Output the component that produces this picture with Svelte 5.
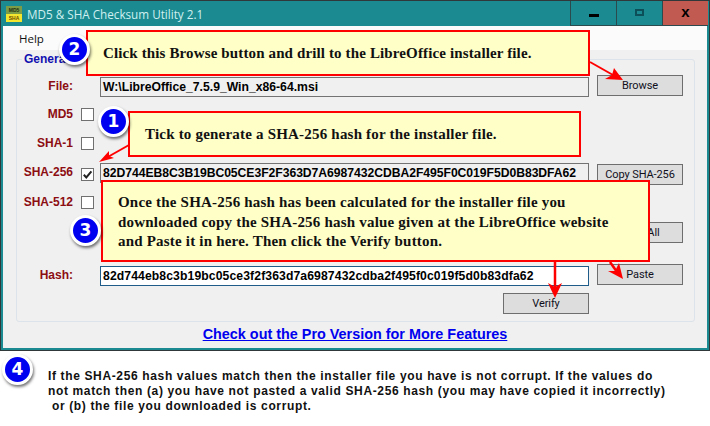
<script lang="ts">
  const hash = "82D744EB8C3B19BC05CE3F2F363D7A6987432CDBA2F495F0C019F5D0B83DFA62";
</script>

<div class="page">
  <div class="window">
    <header class="titlebar">
      <div class="appicon"><span class="top">MD5</span><span class="bottom">SHA</span></div>
      <span class="title">MD5 &amp; SHA Checksum Utility 2.1</span>
      <div class="controls">
        <div class="ctl"><span class="min"></span></div>
        <div class="ctl"><span class="max"></span></div>
        <div class="ctl close"><span class="x">x</span></div>
      </div>
    </header>

    <div class="client">
      <nav class="menu"><span>Help</span></nav>

      <fieldset class="group">
        <legend>General</legend>

        <div class="row">
          <span class="label">File:</span>
          <span></span>
          <div class="field">W:\LibreOffice_7.5.9_Win_x86-64.msi</div>
          <button>Browse</button>
        </div>
        <div class="row g6">
          <span class="label">MD5</span>
          <span class="check"></span>
        </div>
        <div class="row g7">
          <span class="label">SHA-1</span>
          <span class="check"></span>
        </div>
        <div class="row g9 sha256">
          <span class="label">SHA-256</span>
          <span class="check">
            <svg viewBox="0 0 13 13" width="13" height="13"><path d="M2.8 6.8 5.3 9.4 10.4 3.4" fill="none" stroke="#222" stroke-width="2" /></svg>
          </span>
          <div class="field">{hash}</div>
          <button>Copy SHA-256</button>
        </div>
        <div class="row g6">
          <span class="label">SHA-512</span>
          <span class="check"></span>
        </div>
        <div class="row g9">
          <span></span><span></span><span></span>
          <button>Copy All</button>
        </div>
        <div class="row g20">
          <span class="label">Hash:</span>
          <span></span>
          <div class="field entry">{hash.toLowerCase()}</div>
          <button>Paste</button>
        </div>
        <div class="row g7 verify">
          <span></span><span></span>
          <button>Verify</button>
        </div>
      </fieldset>

      <div class="link">Check out the Pro Version for More Features</div>
    </div>
  </div>

  <div class="note">
    <div class="badge inflow">4</div>
    <p>
      If the SHA-256 hash values match then the installer file you have is not corrupt. If the values do<br />
      not match then (a) you have not pasted a valid SHA-256 hash (you may have copied it incorrectly)<br />
      &nbsp;or (b) the file you downloaded is corrupt.
    </p>
  </div>

  <!-- annotations drawn over the screenshot -->
  <div class="callout c2">Click this Browse button and drill to the LibreOffice installer file.</div>
  <div class="callout c1">Tick to generate a SHA-256 hash for the installer file.</div>
  <div class="callout c3">
    Once the SHA-256 hash has been calculated for the installer file you<br />
    downloaded copy the SHA-256 hash value given at the LibreOffice website<br />
    and Paste it in here. Then click the Verify button.
  </div>

  <svg class="arrows" viewBox="0 0 710 426" width="710" height="426">
    <path d="M590 62 613 75" stroke="#f00" stroke-width="2" />
    <path d="M623 80 605 79 612 75 614 68Z" fill="#f00" />
    <path d="M129 145 106 158" stroke="#f00" stroke-width="2" />
    <path d="M99 162 109 151 109 156 114 158Z" fill="#f00" />
    <path d="M610 262 617 272" stroke="#f00" stroke-width="2.5" />
    <path d="M623 279 608 271 615 271 619 263Z" fill="#f00" />
    <path d="M555 262V288" stroke="#f00" stroke-width="2.5" />
    <path d="M555 298 548 283 555 287 562 283Z" fill="#f00" />
  </svg>

  <div class="badge b2">2</div>
  <div class="badge b1">1</div>
  <div class="badge b3">3</div>
</div>

<style>
  :global(body) {
    background: #fff;
  }

  .page {
    position: relative;
    width: 710px;
    height: 426px;
    overflow: hidden;
    background: #fff;
    font-family: "Liberation Sans", sans-serif;
  }

  .window {
    box-sizing: border-box;
    width: 710px;
    height: 351px;
    background: #1b8b91;
    border: 1px solid #30383a;
    padding: 0 2px 2px;
    display: flex;
    flex-direction: column;
  }

  .titlebar {
    height: 25px;
    flex: none;
    display: flex;
    align-items: center;
    padding-left: 3px;
  }

  .appicon {
    width: 16px;
    height: 16px;
    margin-right: 5px;
    display: flex;
    flex-direction: column;
    font-weight: 700;
    text-align: center;
  }

  .appicon span {
    height: 8px;
    line-height: 8px;
    font-size: 5px;
    color: #22300f;
  }

  .appicon .top {
    background: #7c9c48;
  }

  .appicon .bottom {
    background: #f4e62f;
    color: #6b4a00;
  }

  .title {
    font-family: "Open Sans", sans-serif;
    font-size: 11.7px;
    color: #cfeff0;
  }

  .controls {
    margin-left: auto;
    display: flex;
    height: 25px;
    margin-right: -1px;
  }

  .ctl {
    width: 45px;
    border-left: 1px solid #2b4a4e;
    border-bottom: 1px solid #2b4a4e;
    display: grid;
    place-items: center;
  }

  .ctl.close {
    background: #c15a50;
  }

  .min {
    width: 10px;
    height: 3px;
    margin-top: 4px;
    background: #000;
  }

  .max {
    box-sizing: border-box;
    width: 9px;
    height: 7px;
    margin-top: -2px;
    border: 2px solid #0c4f58;
  }

  .x {
    font-weight: 700;
    font-size: 15px;
    line-height: 1;
    margin-top: -4px;
    color: #000;
  }

  .client {
    flex: 1;
    min-height: 0;
    background: #f0f0f0;
    display: flex;
    flex-direction: column;
  }

  .menu {
    height: 24px;
    flex: none;
    background: #fbfbfb;
    display: flex;
    align-items: center;
    padding-left: 16px;
    font-family: "Open Sans", sans-serif;
    font-size: 11.5px;
    color: #111;
  }

  .group {
    box-sizing: border-box;
    margin: 2px 13px 0 13px;
    width: 679px;
    height: 270px;
    padding: 8px 0 0 3px;
    border: 1px solid #dce3ea;
    border-radius: 3px;
    min-inline-size: 0;
  }

  legend {
    margin-left: 2px;
    padding: 0 2px;
    font-weight: 700;
    font-size: 12px;
    line-height: 15px;
    color: #1010b0;
  }

  .row {
    display: grid;
    grid-template-columns: 53px 27px 489px 86px;
    height: 22px;
    align-items: center;
  }

  .g6 {
    margin-top: 6px;
  }

  .g7 {
    margin-top: 7px;
  }

  .g9 {
    margin-top: 9px;
  }

  .g20 {
    margin-top: 20px;
  }

  .label {
    text-align: right;
    font-weight: 700;
    font-size: 12px;
    color: #8c0d12;
  }

  .check {
    box-sizing: border-box;
    width: 13px;
    height: 13px;
    margin-left: 8px;
    background: #fff;
    border: 1px solid #707070;
    display: block;
  }

  .check svg {
    display: block;
    margin: -1px;
  }

  .field {
    box-sizing: border-box;
    align-self: end;
    height: 20px;
    border: 1px solid #737373;
    background: #f0f0f0;
    font-weight: 700;
    font-size: 12.2px;
    line-height: 18px;
    padding-left: 2px;
    color: #000;
    white-space: nowrap;
    overflow: hidden;
  }

  .field.entry {
    background: #fff;
    border-color: #1f5c8a;
    letter-spacing: 0.1px;
  }

  .sha256 .label {
    margin-top: -4px;
  }

  .sha256 .field {
    align-self: start;
    letter-spacing: -0.05px;
  }

  .sha256 button {
    margin-top: 1px;
  }

  button {
    grid-column: 4;
    align-self: start;
    box-sizing: border-box;
    width: 86px;
    height: 21px;
    margin-left: 8px;
    padding: 0;
    border: 1px solid #6e6e6e;
    background: #dddddd;
    font-family: "Roboto", sans-serif;
    font-size: 11px;
    letter-spacing: -0.1px;
    color: #10101c;
    white-space: nowrap;
  }

  .verify {
    grid-template-columns: 53px 27px 403px 86px;
  }

  .verify button {
    margin-left: 0;
  }

  .link {
    text-align: center;
    padding-top: 4px;
    font-weight: 700;
    font-size: 14.4px;
    line-height: 17px;
    color: #0000ee;
    text-decoration: underline;
  }

  .note {
    display: flex;
    align-items: flex-start;
    gap: 15px;
    padding: 3px 0 0 2px;
  }

  .note p {
    margin: 15px 0 0;
    font-weight: 700;
    font-size: 12px;
    line-height: 15px;
    letter-spacing: 0.64px;
    color: #111;
    white-space: nowrap;
  }

  .callout {
    position: absolute;
    box-sizing: border-box;
    border: 2px solid #f00;
    background: #ffffc8;
    font-family: "Liberation Serif", serif;
    font-weight: 700;
    font-size: 15px;
    line-height: 19.5px;
    letter-spacing: 0.2px;
    color: #111;
    white-space: nowrap;
  }

  .c2 {
    left: 86px;
    top: 30px;
    width: 504px;
    height: 46px;
    padding: 12px 0 0 15px;
    letter-spacing: 0.13px;
  }

  .c1 {
    left: 128px;
    top: 111px;
    width: 453px;
    height: 46px;
    padding: 12px 0 0 15px;
  }

  .c3 {
    left: 101px;
    top: 180px;
    width: 549px;
    height: 82px;
    padding: 11px 0 0 15px;
  }

  .arrows {
    position: absolute;
    left: 0;
    top: 0;
    pointer-events: none;
  }

  .badge {
    box-sizing: border-box;
    width: 31px;
    height: 31px;
    border: 3px solid #fff;
    border-radius: 50%;
    background: #0000f0;
    box-shadow: 1px 2px 3px rgba(0, 0, 0, 0.55);
    color: #fff;
    font-family: "DejaVu Sans", sans-serif;
    font-weight: 700;
    font-size: 17px;
    line-height: 25px;
    text-align: center;
  }

  .badge.inflow {
    flex: none;
  }

  .b2 {
    position: absolute;
    left: 59px;
    top: 34px;
  }

  .b1 {
    position: absolute;
    left: 98px;
    top: 106px;
  }

  .b3 {
    position: absolute;
    left: 70px;
    top: 215px;
  }
</style>
